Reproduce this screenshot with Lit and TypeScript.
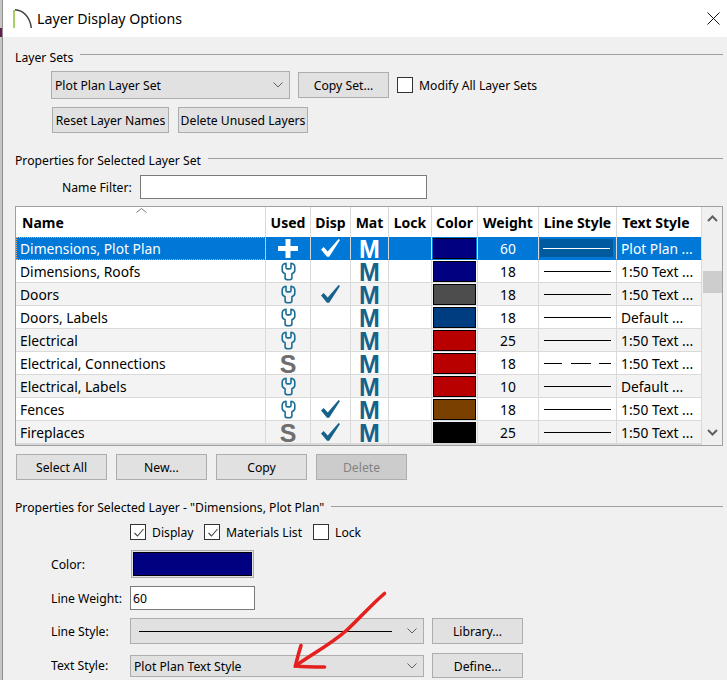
import { LitElement, html, css, svg, nothing } from "lit";
import { customElement } from "lit/decorators.js";

type Row = { name: string; used: "plus" | "wrench" | "s"; disp: boolean; color: string; weight: number; dash?: boolean; text: string };

const ROWS: Row[] = [
  { name: "Dimensions, Plot Plan", used: "plus", disp: true, color: "#000080", weight: 60, text: "Plot Plan ..." },
  { name: "Dimensions, Roofs", used: "wrench", disp: false, color: "#000080", weight: 18, text: "1:50 Text ..." },
  { name: "Doors", used: "wrench", disp: true, color: "#4d4d4d", weight: 18, text: "1:50 Text ..." },
  { name: "Doors, Labels", used: "wrench", disp: false, color: "#003c80", weight: 18, text: "Default ..." },
  { name: "Electrical", used: "wrench", disp: false, color: "#b80000", weight: 25, text: "1:50 Text ..." },
  { name: "Electrical, Connections", used: "s", disp: false, color: "#b80000", weight: 18, dash: true, text: "1:50 Text ..." },
  { name: "Electrical, Labels", used: "wrench", disp: false, color: "#b80000", weight: 10, text: "Default ..." },
  { name: "Fences", used: "wrench", disp: true, color: "#7a4000", weight: 18, text: "1:50 Text ..." },
  { name: "Fireplaces", used: "s", disp: true, color: "#000000", weight: 25, text: "1:50 Text ..." },
];

const HEADS = ["Name", "Used", "Disp", "Mat", "Lock", "Color", "Weight", "Line Style", "Text Style"];

const chevron = html`<svg class="chev" width="10" height="6" viewBox="0 0 10 6"><path d="M.5.500l4.500 4.500 4.500-4.500" fill="none" stroke="#606060" stroke-width="1"/></svg>`;
const wrench = html`<svg width="15" height="19" viewBox="0 0 15 19"><path d="M5 1.200C2.800 1.600 1.200 3 1.200 5v3.200c0 1.700 1 2.800 2.900 3.500v4.200c0 1.300 1.300 1.900 3.400 1.900s3.400-.6 3.400-1.900v-4.200c1.900-.7 2.900-1.800 2.900-3.500V5c0-2-1.600-3.400-3.800-3.800v4.300c0 .9-.6 1.400-1.500 1.400h-2c-.9 0-1.500-.5-1.500-1.400z" fill="none" stroke="currentColor" stroke-width="1.600" stroke-linejoin="round"/></svg>`;
const plus = html`<svg width="20" height="19" viewBox="0 0 20 19"><path d="M7.500 0h5v7h7.500v5h-7.500v7h-5v-7H0V7h7.500z" fill="currentColor"/></svg>`;
const check = html`<svg width="19" height="18" viewBox="0 0 19 18"><path d="M0 10.500l2.700-2.400 4 4.300L17.600 0 19 1 8.200 17.800H6z" fill="currentColor"/></svg>`;
const tick = svg`<path d="M3.500 8l3 3 6-7" fill="none" stroke="#444" stroke-width="1.100"/>`;

@customElement("app-root")
export class AppRoot extends LitElement {
  static styles = css`
    :host { display: block; width: 727px; height: 680px; overflow: hidden; position: relative; background: #f0f0f0; font: 12.2px/16px "Noto Sans", "Open Sans", sans-serif; color: #000; box-sizing: border-box; }
    * { box-sizing: border-box; }
    .edge { position: absolute; left: 0; top: 0; bottom: 0; width: 3px; background: #c6c6c6; border-right: 1px solid #8e8e8e; }
    .edge b { position: absolute; left: 0; top: 28px; width: 1.500px; height: 9px; background: #6a1b50; }
    .title { height: 37px; background: #fff; display: flex; align-items: center; padding: 0 7px 0 13px; gap: 5px; }
    .title .cap { font-size: 14.200px; flex: 1; }
    .body { padding: 12px 4px 0 15px; }
    .group { display: flex; align-items: center; gap: 7px; height: 16px; }
    .group span, .lbl { padding-top: 2px; }
    .group i { flex: 1; height: 1px; background: #a0a0a0; }
    .g1 i { margin-bottom: 6px; }
    .g2 { margin-top: 19px; }
    .g2 i { margin-bottom: 4px; }
    .g3 { margin-top: 19px; }
    .g3 i { margin-bottom: 2px; }
    .row { display: flex; align-items: center; }
    .sets1 { margin: 6px 0 0 36px; height: 28px; gap: 8px; }
    .sets2 { margin: 8px 0 0 37px; gap: 9px; }
    .btn { height: 26px; background: #e1e1e1; border: 1px solid #adadad; display: flex; align-items: center; justify-content: center; white-space: nowrap; padding-top: 2px; }
    .w91 { width: 91px; }
    .reset { width: 117px; }
    .delunused { width: 130px; }
    .disabled { background: #cccccc; color: #838383; }
    .select { height: 26px; background: #e1e1e1; border: 1px solid #adadad; display: flex; align-items: center; padding: 0 6px 0 3px; justify-content: space-between; }
    .setsel { width: 239px; height: 28px; }
    .chk { width: 16px; height: 16px; background: #fff; border: 1px solid #333; flex: none; display: block; }
    .chklabel { margin-left: 6px; padding-top: 2px; }
    .modify { margin-left: -2px; }
    .filter { margin: 7px 0 0 47px; }
    .filter .lbl { width: 78px; flex: none; }
    .filter .field { width: 287px; height: 24px; }
    .field { background: #fff; border: 1px solid #7a7a7a; display: flex; align-items: center; padding: 2px 2px 0; }
    .table { margin-top: 7px; height: 240px; width: 708px; border: 1px solid #a0a0a0; background: #fff; display: grid; grid-template-columns: 1fr 20px; overflow: hidden; }
    .grid { display: grid; grid-template-columns: 250px 45px 40px 38px 43px 46px 61px 78px 85px; grid-template-rows: 30px; grid-auto-rows: 23px; align-content: start; position: relative; height: 238px; overflow: hidden; }
    .cell { border-right: 1px solid #d9d9d9; border-bottom: 1px solid #d9d9d9; display: flex; align-items: center; justify-content: center; font-size: 13.800px; white-space: nowrap; min-width: 0; }
    .num { padding-top: 2px; }
    .head { height: 30px; font-weight: 700; font-size: 14px; background: #fff; border-bottom: 0; padding-top: 2px; }
    .head.first { justify-content: flex-start; padding-left: 6px; }
    .head.last { padding-right: 6px; }
    .sort { position: absolute; left: 120px; top: 1px; }
    .left { justify-content: flex-start; padding: 2px 0 0 4px; }
    .alt { background: #f3f3f3; }
    .sel { background: #0078d7; color: #fff; border-color: #0078d7; border-right-color: #d9d9d9; }
    .sel.focus { outline: 1px dotted #f0a868; outline-offset: -1px; }
    .teal { color: #17628a; display: flex; }
    .wr { color: #1b6f96; }
    .sel .teal { color: #fff; }
    .glyph { font: 700 25px/18px "Liberation Sans", sans-serif; padding-top: 2px; }
    .sgl { color: #6e6e6e; }
    .swatch { width: 43px; height: 21px; border: 1px solid #000; display: block; }
    .ln { display: block; width: 67px; height: 0; border-top: 1.500px solid #000; }
    .dash { border-top: 1.500px solid; border-image: repeating-linear-gradient(90deg, #000 0 19px, transparent 19px 27px) 2; }
    .linesel { padding: 2px 3px 2px 1px; }
    .linesel > span { flex: 1; align-self: stretch; background: #005a9e; display: flex; align-items: center; justify-content: center; }
    .linesel .ln { border-top-color: #fff; }
    .stub { height: 1px; }
    .bar { background: #f0f0f0; display: flex; flex-direction: column; align-items: center; }
    .bar .up { margin-top: 8px; }
    .bar .thumb { width: 19px; height: 22px; background: #cdcdcd; margin-top: 49px; }
    .bar .down { margin-top: auto; margin-bottom: 9px; }
    .actions { margin: 8px 0 0 1px; gap: 9px; }
    .checks { margin: 9px 0 0 115px; height: 16px; }
    .c1 { width: 52px; }
    .c2 { width: 87px; flex: none; }
    .form { margin: 10px 0 0 36px; display: grid; grid-template-columns: 79px 294px 8px 91px; align-items: center; row-gap: 8px; }
    .colorbtn { width: 123px; height: 28px; margin-left: 1px; background: #e1e1e1; border: 1px solid #adadad; padding: 1px; }
    .colorbtn span { display: block; height: 100%; background: #000080; border: 1px solid #000; }
    .weight { width: 125px; height: 24px; }
    .linesample { flex: 1; height: 0; border-top: 1.500px solid #000; margin: 0 15px 0 5px; }
    .tsel { height: 22px; margin-top: 2px; }
    .define { height: 25px; margin-top: 1px; }
    .arrow { position: absolute; left: 0; top: 0; pointer-events: none; }
  `;

  private cellUsed(r: Row) {
    if (r.used === "plus") return plus;
    if (r.used === "wrench") return html`<span class="teal wr">${wrench}</span>`;
    return html`<span class="glyph sgl">S</span>`;
  }

  private row(r: Row, i: number) {
    const bg = i === 0 ? "sel" : i % 2 === 0 ? "alt" : "";
    return html`
      <div class="cell left ${bg} ${i === 0 ? "focus" : ""}">${r.name}</div>
      <div class="cell ${bg}">${this.cellUsed(r)}</div>
      <div class="cell ${bg}"><span class="teal">${r.disp ? check : nothing}</span></div>
      <div class="cell ${bg}"><span class="glyph teal">M</span></div>
      <div class="cell ${bg}"></div>
      <div class="cell ${bg}"><span class="swatch" style="background:${r.color}"></span></div>
      <div class="cell num ${bg}">${r.weight}</div>
      <div class="cell ${bg} ${i === 0 ? "linesel" : ""}">
        ${i === 0 ? html`<span><span class="ln"></span></span>` : html`<span class="ln ${r.dash ? "dash" : ""}"></span>`}
      </div>
      <div class="cell left ${bg}">${r.text}</div>
    `;
  }

  render() {
    return html`
      <div class="title">
        <svg width="19" height="19" viewBox="0 0 19 19"><path d="M1 19V1" stroke="#a9cf6b" stroke-width="2" fill="none"/><path d="M2 .7C10 1 17 8 18.300 19" stroke="#3c3c3c" stroke-width="1.400" fill="none"/></svg>
        <span class="cap">Layer Display Options</span>
        <svg width="13" height="13" viewBox="0 0 13 13"><path d="M.5.5l12 12M12.500.5l-12 12" stroke="#111" stroke-width="1" fill="none"/></svg>
      </div>
      <div class="edge"><b></b></div>
      <div class="body">
        <div class="group g1"><span>Layer Sets</span><i></i></div>
        <div class="row sets1">
          <div class="select setsel"><span class="lbl">Plot Plan Layer Set</span>${chevron}</div>
          <div class="btn w91">Copy Set...</div>
          <span class="chk"></span><span class="chklabel modify">Modify All Layer Sets</span>
        </div>
        <div class="row sets2">
          <div class="btn reset">Reset Layer Names</div>
          <div class="btn delunused">Delete Unused Layers</div>
        </div>
        <div class="group g2"><span>Properties for Selected Layer Set</span><i></i></div>
        <div class="row filter"><span class="lbl">Name Filter:</span><div class="field"></div></div>
        <div class="table">
          <div class="grid">
            ${HEADS.map((h, i) => html`<div class="cell head ${i === 0 ? "first" : ""} ${i === 8 ? "last" : ""}">${h}</div>`)}
            <svg class="sort" width="11" height="5" viewBox="0 0 11 5"><path d="M.5 4.500l5-4 5 4" fill="none" stroke="#777"/></svg>
            ${ROWS.map((r, i) => this.row(r, i))}
            ${HEADS.map(() => html`<div class="cell stub"></div>`)}
          </div>
          <div class="bar">
            <svg class="up" width="11" height="7" viewBox="0 0 11 7"><path d="M1 6l4.500-4.500L10 6" fill="none" stroke="#606060" stroke-width="2"/></svg>
            <div class="thumb"></div>
            <svg class="down" width="11" height="7" viewBox="0 0 11 7"><path d="M1 1l4.500 4.500L10 1" fill="none" stroke="#606060" stroke-width="2"/></svg>
          </div>
        </div>
        <div class="row actions">
          <div class="btn w91">Select All</div>
          <div class="btn w91">New...</div>
          <div class="btn w91">Copy</div>
          <div class="btn w91 disabled">Delete</div>
        </div>
        <div class="group g3"><span>Properties for Selected Layer - "Dimensions, Plot Plan"</span><i></i></div>
        <div class="row checks">
          <svg class="chk" viewBox="0 0 14 14">${tick}</svg><span class="chklabel c1">Display</span>
          <svg class="chk" viewBox="0 0 14 14">${tick}</svg><span class="chklabel c2">Materials List</span>
          <span class="chk"></span><span class="chklabel">Lock</span>
        </div>
        <div class="form">
          <span class="lbl">Color:</span><div class="colorbtn"><span></span></div><span></span><span></span>
          <span class="lbl">Line Weight:</span><div class="field weight">60</div><span></span><span></span>
          <span class="lbl">Line Style:</span><div class="select"><span class="linesample"></span>${chevron}</div><span></span><div class="btn">Library...</div>
          <span class="lbl">Text Style:</span><div class="select tsel"><span class="lbl">Plot Plan Text Style</span>${chevron}</div><span></span><div class="btn define">Define...</div>
        </div>
      </div>
      <svg class="arrow" width="727" height="680" viewBox="0 0 727 680">
        <path d="M384.500 593.500C370 606 358 620 347 630 330 645 312 654 295.500 666" fill="none" stroke="#e5211f" stroke-width="3.600" stroke-linecap="round"/>
        <path d="M301 645.500C299 652 297 659 295.500 666 305 667 315 667 324.500 667" fill="none" stroke="#e5211f" stroke-width="3.600" stroke-linecap="round"/>
      </svg>
    `;
  }
}
